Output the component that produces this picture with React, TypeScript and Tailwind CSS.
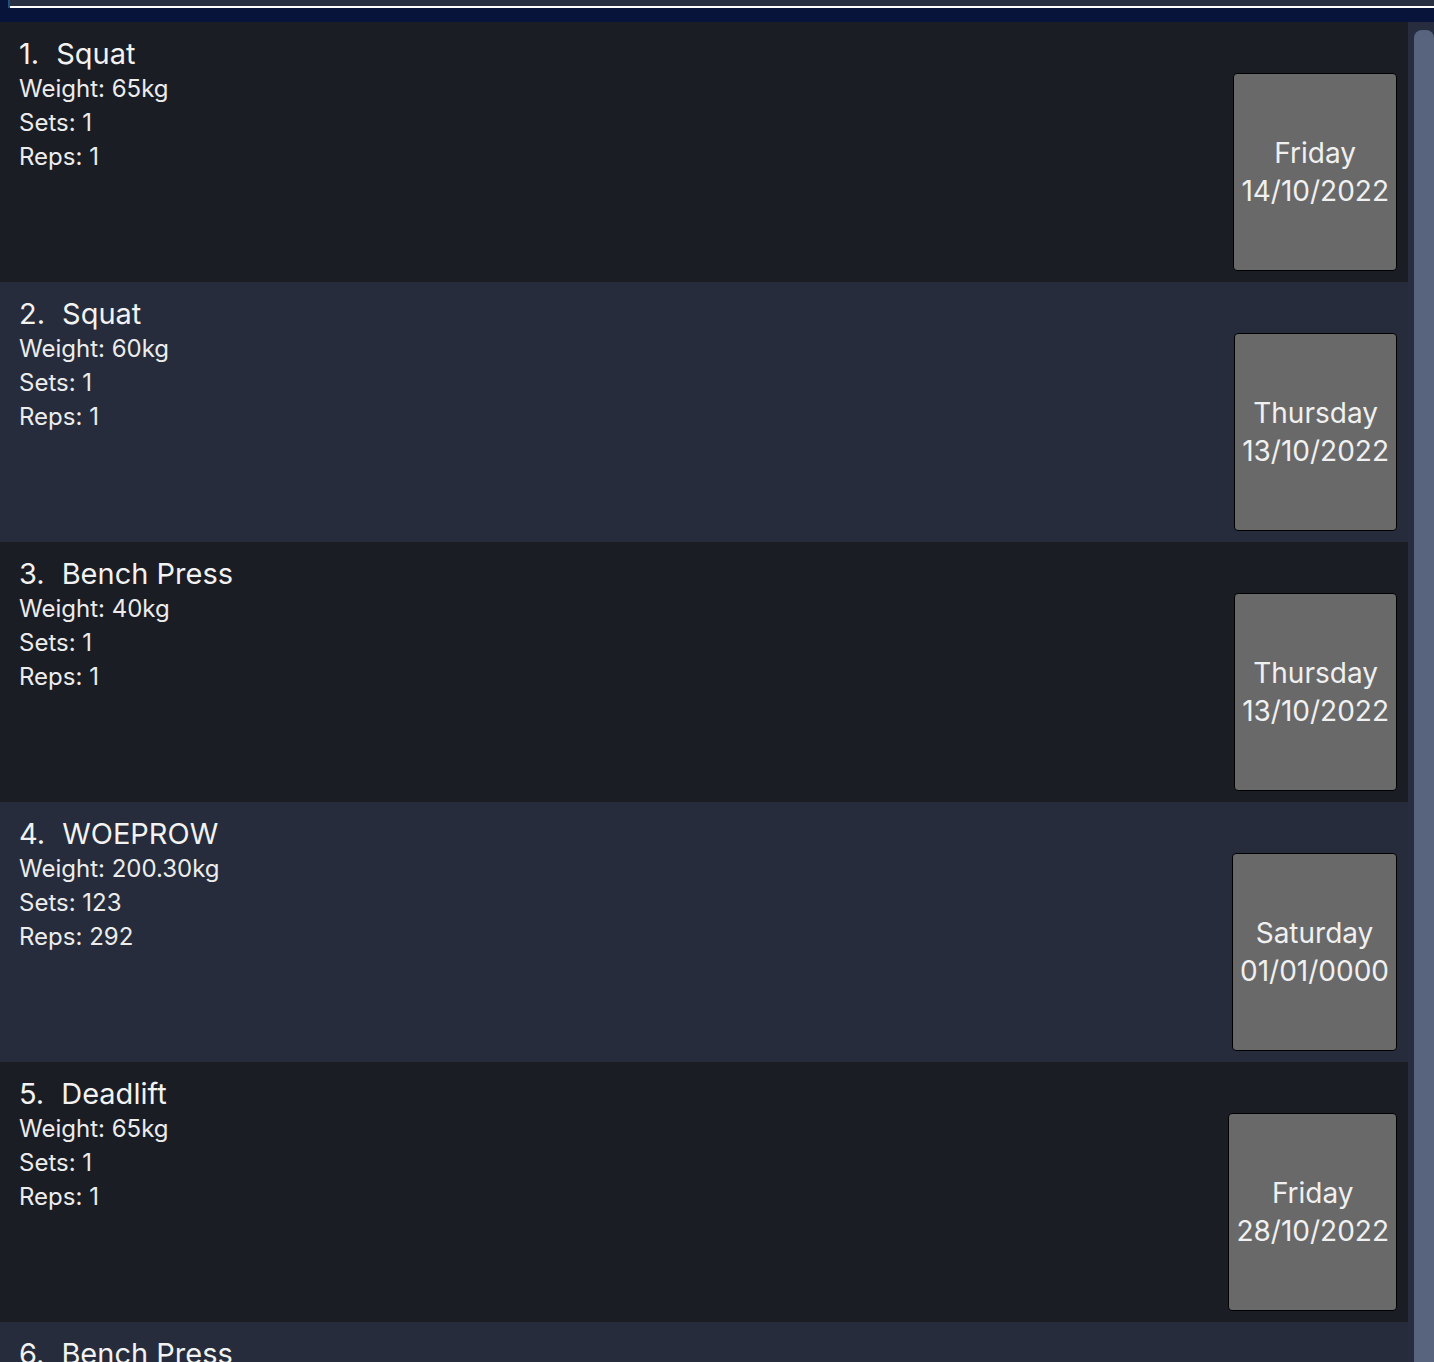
const workouts = [
  { name: 'Squat', weight: '65kg', sets: '1', reps: '1', day: 'Friday', date: '14/10/2022' },
  { name: 'Squat', weight: '60kg', sets: '1', reps: '1', day: 'Thursday', date: '13/10/2022' },
  { name: 'Bench Press', weight: '40kg', sets: '1', reps: '1', day: 'Thursday', date: '13/10/2022' },
  { name: 'WOEPROW', weight: '200.30kg', sets: '123', reps: '292', day: 'Saturday', date: '01/01/0000' },
  { name: 'Deadlift', weight: '65kg', sets: '1', reps: '1', day: 'Friday', date: '28/10/2022' },
  { name: 'Bench Press', weight: '40kg', sets: '1', reps: '1', day: 'Thursday', date: '13/10/2022' },
]

export default function App() {
  return (
    <div className="w-[1434px] h-[1362px] overflow-hidden flex flex-col bg-[#1b1d25] font-['Inter',sans-serif]">
      {/* command box remnant */}
      <div className="h-[22px] shrink-0 bg-[#08143a] flex">
        <div className="w-[8px]" />
        <div className="flex-1 h-[8px] border-l-2 border-[#21507c]">
          <div className="h-full bg-[#283042] border-b-2 border-white" />
        </div>
      </div>

      <div className="flex flex-1 min-h-0">
        <div className="flex-1 overflow-hidden">
          {workouts.map((w, i) => (
            <div
              key={i}
              className={`h-[260px] flex justify-between ${i % 2 === 0 ? 'bg-[#1b1d25]' : 'bg-[#262c3b]'}`}
            >
              <div className="pl-[19px] pt-[14px] text-[#ececec]">
                <div className="flex gap-[17px] text-[29px] leading-[36px] text-[#f2f2f2]">
                  <span>{i + 1}.</span>
                  <span>{w.name}</span>
                </div>
                <div className="text-[24px] leading-[34px]">Weight: {w.weight}</div>
                <div className="text-[24px] leading-[34px]">Sets: {w.sets}</div>
                <div className="text-[24px] leading-[34px]">Reps: {w.reps}</div>
              </div>
              <div className="self-end mb-[11px] mr-[11px] h-[198px] px-[7px] border border-black rounded-[4px] bg-[#696969] flex flex-col justify-center items-center text-[28px] leading-[38px] text-[#f0f0f0]">
                <span>{w.day}</span>
                <span>{w.date}</span>
              </div>
            </div>
          ))}
        </div>

        {/* scrollbar */}
        <div className="w-[26px] shrink-0 bg-[#272d3e] pt-[8px] pl-[6px] flex">
          <div className="flex-1 rounded-t-[8px] bg-[#58637d]" />
        </div>
      </div>
    </div>
  )
}
